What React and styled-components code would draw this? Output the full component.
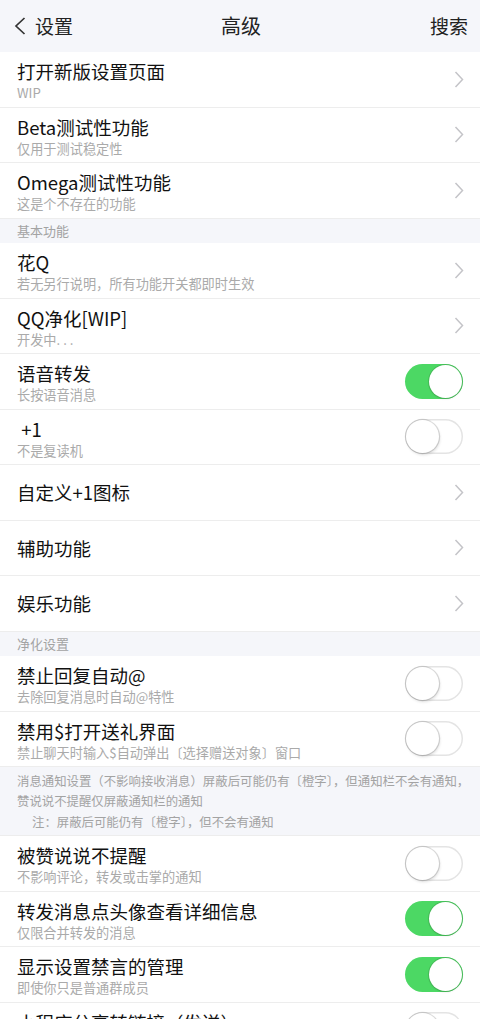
import React from 'react';
import styled, { createGlobalStyle } from 'styled-components';

const Global = createGlobalStyle`
  html, body { margin: 0; padding: 0; background: #fff; }
  body {
    font-family: "Noto Sans CJK SC", "Noto Sans", sans-serif;
    -webkit-font-smoothing: antialiased;
  }
  #root { width: 480px; }
`;

const Page = styled.div`
  width: 480px;
  background: #fff;
`;

const Header = styled.header`
  height: 52px;
  box-sizing: border-box;
  background: #f5f6fa;
  display: grid;
  grid-template-columns: 1fr auto 1fr;
  align-items: center;
  padding: 0 12px 1px 14px;
  color: #222;
`;

const Back = styled.div`
  display: flex;
  align-items: center;
  gap: 9px;
  font-size: 19px;
`;

const Title = styled.h1`
  margin: 0;
  font-size: 20px;
  font-weight: 400;
  color: #222;
`;

const Action = styled.div`
  justify-self: end;
  font-size: 19px;
`;

const Row = styled.div`
  height: 55.5px;
  box-sizing: border-box;
  border-bottom: 1px solid #ededed;
  display: flex;
  align-items: center;
  padding: 0 16px 0 17px;
  background: #fff;
`;

const Text = styled.div`
  flex: 1;
  min-width: 0;
  display: flex;
  flex-direction: column;
  padding-top: ${p => (p.$sub ? 2 : 0)}px;
`;

const RowTitle = styled.div`
  font-size: 18.5px;
  line-height: 26px;
  color: #111;
  white-space: nowrap;
`;

const RowSub = styled.div`
  font-size: 13.2px;
  line-height: 18px;
  color: #aaaaaa;
  white-space: nowrap;
`;

const Section = styled.div`
  height: 24.5px;
  box-sizing: border-box;
  background: #f5f6fa;
  display: flex;
  align-items: center;
  padding: 0 17px;
  font-size: 13px;
  color: #a3a3a3;
`;

const Info = styled.div`
  height: 69px;
  box-sizing: border-box;
  background: #f5f6fa;
  padding: 4px 0 4px 17px;
  font-size: 12.4px;
  color: #a3a3a3;
  border-bottom: 1px solid #ededed;
`;

const InfoLine = styled.div`
  line-height: 20px;
  white-space: nowrap;
  padding-left: ${p => (p.$indent ? 15 : 0)}px;
  margin-top: ${p => (p.$indent ? 1 : 0)}px;
`;

const Track = styled.div`
  position: relative;
  flex: none;
  width: 58px;
  height: 35px;
  margin-right: 1px;
  border-radius: 18px;
  box-sizing: border-box;
  background: ${p => (p.$on ? '#4cd864' : '#fff')};
  box-shadow: ${p => (p.$on ? 'none' : 'inset 0 0 0 1.5px #e4e4e4')};
`;

const Knob = styled.div`
  position: absolute;
  top: 1px;
  left: ${p => (p.$on ? '24px' : '1px')};
  width: 33px;
  height: 33px;
  border-radius: 50%;
  background: #fff;
  box-shadow: ${p =>
    p.$on
      ? '0 0 0 1px rgba(60,140,70,0.35), 0 1px 2px rgba(0,0,0,0.12)'
      : '0 0 0 1.2px rgba(0,0,0,0.13), 1px 2px 3px rgba(0,0,0,0.12)'};
`;

const ChevronSvg = styled.svg`
  flex: none;
  display: block;
`;

const Chevron = () => (
  <ChevronSvg width="10" height="17" viewBox="0 0 10 17">
    <polyline points="1.5,1 8.5,8.5 1.5,16" fill="none" stroke="#c4c4c8" strokeWidth="1.5" strokeLinejoin="miter" />
  </ChevronSvg>
);

const BackIcon = () => (
  <ChevronSvg width="12" height="18" viewBox="0 0 12 18">
    <polyline points="10.5,1 2,9 10.5,17" fill="none" stroke="#333" strokeWidth="1.7" />
  </ChevronSvg>
);

const Switch = ({ on }) => (
  <Track $on={on}>
    <Knob $on={on} />
  </Track>
);

const Item = ({ title, sub, kind = 'nav', on }) => (
  <Row>
    <Text $sub={sub !== undefined}>
      <RowTitle>{title}</RowTitle>
      {sub !== undefined && <RowSub>{sub}</RowSub>}
    </Text>
    {kind === 'nav' ? <Chevron /> : <Switch on={on} />}
  </Row>
);

export default function App() {
  return (
    <Page>
      <Global />
      <Header>
        <Back>
          <BackIcon />
          <span>设置</span>
        </Back>
        <Title>高级</Title>
        <Action>搜索</Action>
      </Header>

      <Item title="打开新版设置页面" sub="WIP" />
      <Item title="Beta测试性功能" sub="仅用于测试稳定性" />
      <Item title="Omega测试性功能" sub="这是个不存在的功能" />

      <Section>基本功能</Section>
      <Item title="花Q" sub="若无另行说明，所有功能开关都即时生效" />
      <Item title="QQ净化[WIP]" sub="开发中. . ." />
      <Item title="语音转发" sub="长按语音消息" kind="switch" on />
      <Item title={'\u00a0+1'} sub="不是复读机" kind="switch" />
      <Item title="自定义+1图标" />
      <Item title="辅助功能" />
      <Item title="娱乐功能" />

      <Section>净化设置</Section>
      <Item title="禁止回复自动@" sub="去除回复消息时自动@特性" kind="switch" />
      <Item title="禁用$打开送礼界面" sub="禁止聊天时输入$自动弹出〔选择赠送对象〕窗口" kind="switch" />

      <Info>
        <InfoLine>消息通知设置（不影响接收消息）屏蔽后可能仍有〔橙字〕，但通知栏不会有通知，</InfoLine>
        <InfoLine>赞说说不提醒仅屏蔽通知栏的通知</InfoLine>
        <InfoLine $indent>注：屏蔽后可能仍有〔橙字〕，但不会有通知</InfoLine>
      </Info>

      <Item title="被赞说说不提醒" sub="不影响评论，转发或击掌的通知" kind="switch" />
      <Item title="转发消息点头像查看详细信息" sub="仅限合并转发的消息" kind="switch" on />
      <Item title="显示设置禁言的管理" sub="即使你只是普通群成员" kind="switch" on />
      <Item title="小程序分享转链接（发送）" sub={'\u00a0'} kind="switch" />
    </Page>
  );
}
